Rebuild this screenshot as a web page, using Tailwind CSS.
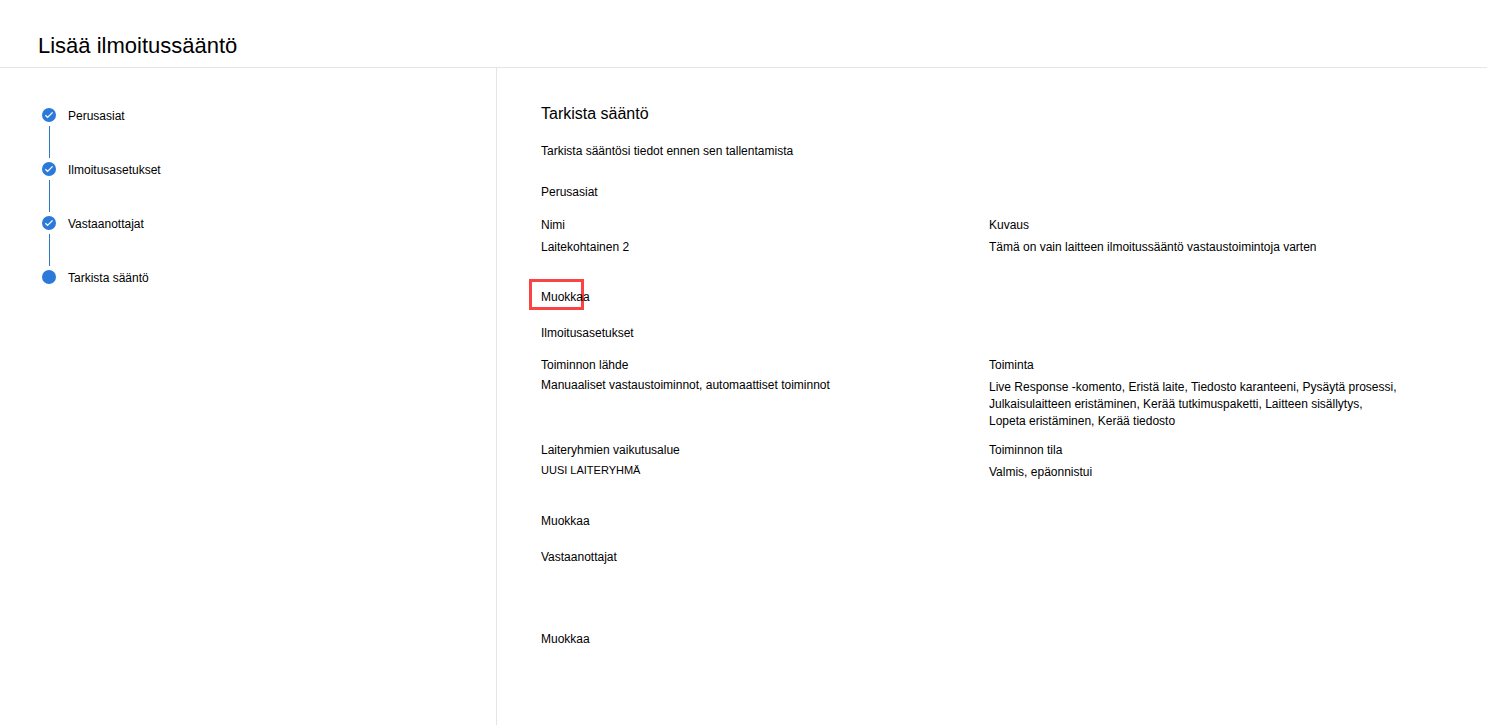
<!DOCTYPE html>
<html lang="fi">
<head>
  <meta charset="UTF-8">
  <meta name="viewport" content="width=device-width, initial-scale=1.0">
  <title>Lisää ilmoitussääntö</title>
  <script src="https://cdn.jsdelivr.net/npm/@tailwindcss/browser@4"></script>
</head>
<body class="flex min-h-screen flex-col bg-white font-['Liberation_Sans',Arial,sans-serif] text-[12px] leading-[17px] text-black">
  <header class="border-b border-[#e5e5e5] pt-8 pb-[7px] pl-[38px]">
    <h1 class="text-[22px] leading-7">Lisää ilmoitussääntö</h1>
  </header>

  <div class="flex flex-1">
    <!-- Wizard steps -->
    <nav class="w-[497px] shrink-0 border-r border-[#e5e5e5] pt-10 pl-[42px]">
      <ol>
        <li class="flex h-[54px] gap-3">
          <div class="flex w-[14px] flex-col items-center gap-1">
            <svg class="size-[14px] shrink-0" viewBox="0 0 14 14"><circle cx="7" cy="7" r="7" fill="#2b79d9"/><path d="M3.4 7.2l2.2 2.2 5-5" fill="none" stroke="#fff" stroke-width="1.3"/></svg>
            <span class="h-8 w-px bg-[#2b79c9]"></span>
          </div>
          <span>Perusasiat</span>
        </li>
        <li class="flex h-[54px] gap-3">
          <div class="flex w-[14px] flex-col items-center gap-1">
            <svg class="size-[14px] shrink-0" viewBox="0 0 14 14"><circle cx="7" cy="7" r="7" fill="#2b79d9"/><path d="M3.4 7.2l2.2 2.2 5-5" fill="none" stroke="#fff" stroke-width="1.3"/></svg>
            <span class="h-8 w-px bg-[#2b79c9]"></span>
          </div>
          <span>Ilmoitusasetukset</span>
        </li>
        <li class="flex h-[54px] gap-3">
          <div class="flex w-[14px] flex-col items-center gap-1">
            <svg class="size-[14px] shrink-0" viewBox="0 0 14 14"><circle cx="7" cy="7" r="7" fill="#2b79d9"/><path d="M3.4 7.2l2.2 2.2 5-5" fill="none" stroke="#fff" stroke-width="1.3"/></svg>
            <span class="h-8 w-px bg-[#2b79c9]"></span>
          </div>
          <span>Vastaanottajat</span>
        </li>
        <li class="flex gap-3" aria-current="step">
          <svg class="size-[14px] shrink-0" viewBox="0 0 14 14"><circle cx="7" cy="7" r="7" fill="#2b79d9"/></svg>
          <span>Tarkista sääntö</span>
        </li>
      </ol>
    </nav>

    <main class="flex-1 pt-9 pr-[50px] pl-11">
      <h2 class="text-[16px] leading-5">Tarkista sääntö</h2>
      <p class="mt-[19px]">Tarkista sääntösi tiedot ennen sen tallentamista</p>

      <section class="mt-6">
        <h3>Perusasiat</h3>
        <dl class="mt-4 grid grid-cols-2">
          <div>
            <dt>Nimi</dt>
            <dd class="mt-[5px]">Laitekohtainen 2</dd>
          </div>
          <div>
            <dt>Kuvaus</dt>
            <dd class="mt-[5px]">Tämä on vain laitteen ilmoitussääntö vastaustoimintoja varten</dd>
          </div>
        </dl>
        <div class="relative mt-[33px] flex">
          <div class="absolute -top-[10px] -left-3 h-[31px] w-[55px] border-3 border-[#fa4343]"></div>
          <button type="button" class="relative">Muokkaa</button>
        </div>
      </section>

      <section class="mt-[19px]">
        <h3>Ilmoitusasetukset</h3>
        <dl class="mt-[15px] grid grid-cols-2 gap-y-3">
          <div>
            <dt>Toiminnon lähde</dt>
            <dd class="mt-[3px]">Manuaaliset vastaustoiminnot, automaattiset toiminnot</dd>
          </div>
          <div>
            <dt>Toiminta</dt>
            <dd class="mt-[5px]">Live Response -komento, Eristä laite, Tiedosto karanteeni, Pysäytä prosessi,<br>Julkaisulaitteen eristäminen, Kerää tutkimuspaketti, Laitteen sisällytys,<br>Lopeta eristäminen, Kerää tiedosto</dd>
          </div>
          <div>
            <dt>Laiteryhmien vaikutusalue</dt>
            <dd class="mt-[3px] text-[11px]">UUSI LAITERYHMÄ</dd>
          </div>
          <div>
            <dt>Toiminnon tila</dt>
            <dd class="mt-[5px]">Valmis, epäonnistui</dd>
          </div>
        </dl>
        <button type="button" class="mt-8 block">Muokkaa</button>
      </section>

      <section class="mt-[19px]">
        <h3>Vastaanottajat</h3>
        <button type="button" class="mt-[65px] block">Muokkaa</button>
      </section>
    </main>
  </div>
</body>
</html>
